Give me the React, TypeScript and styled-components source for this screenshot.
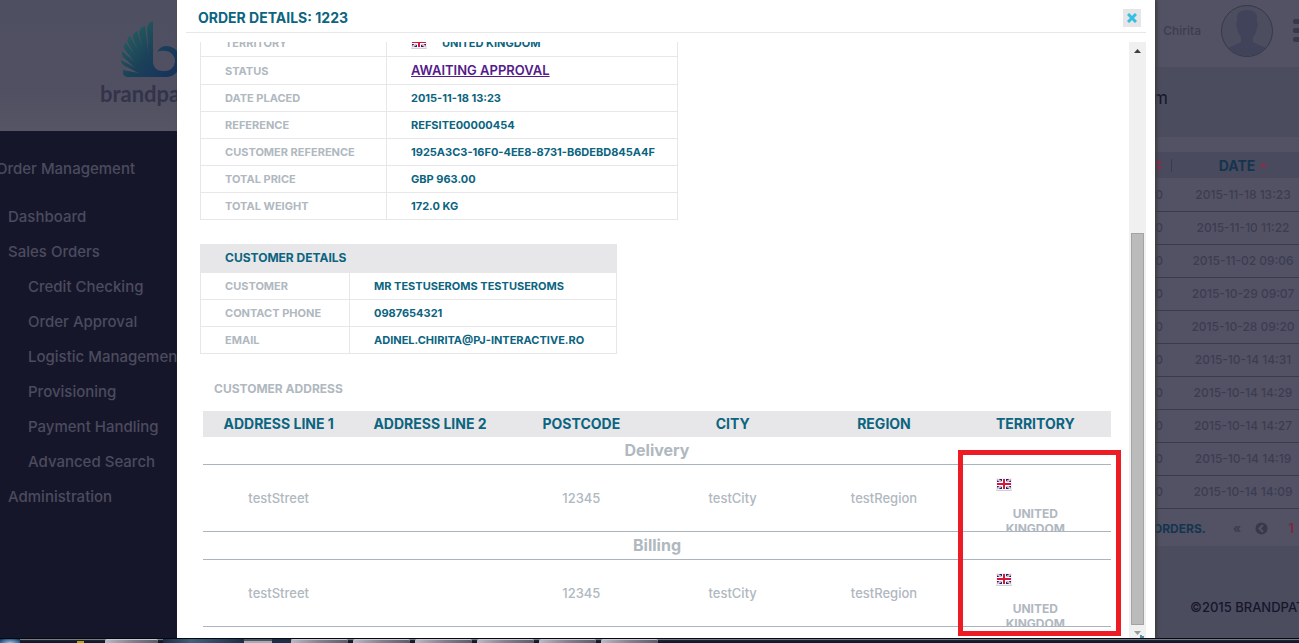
import React from "react";
import styled, { createGlobalStyle } from "styled-components";

const GlobalStyle = createGlobalStyle`
  * { box-sizing: border-box; }
  body { margin: 0; font-family: Inter, "Open Sans", sans-serif; font-size: 13px; }
  button { font: inherit; border: 0; padding: 0; background: none; cursor: pointer; }
  a { color: inherit; text-decoration: none; }
  table { border-collapse: collapse; border-spacing: 0; }
  h1, h2, p { margin: 0; }
`;

const teal = "#0b6480";
const grey = "#b0b8c0";
const line = "#e7e7e9";

const Screen = styled.div`
  position: relative;
  display: grid;
  grid-template-rows: minmax(0, 1fr) 5px;
  height: 100vh;
  overflow: hidden;
`;

const Page = styled.div`
  display: flex;
  min-height: 0;
  overflow: hidden;
  background: #4c4c5f;
`;

const Sidebar = styled.aside`
  flex: 0 0 177px;
  overflow: hidden;
  background: #16162b;
  color: #4b4b5e;
`;

const LogoPanel = styled.div`
  height: 131px;
  padding: 20px 0 0 100px;
  overflow: hidden;
  background: linear-gradient(#4f4f62, #505062 70%, #555565);
`;

const LogoMark = styled.svg`
  display: block;
  width: 80px;
  height: 60px;
`;

const LogoName = styled.div`
  font-family: Lato, sans-serif;
  font-size: 22px;
  font-weight: 700;
  line-height: 28px;
  color: #33334a;
`;

const Nav = styled.nav`
  display: flex;
  flex-direction: column;
  padding-top: 20px;
`;

const NavHeading = styled.a`
  margin-bottom: 13px;
  line-height: 35px;
  font-size: 15px;
  font-weight: 500;
  text-indent: -4px;
  white-space: nowrap;
`;

const NavLink = styled.a<{ $nested?: boolean }>`
  padding-left: ${(p) => (p.$nested ? 28 : 8)}px;
  line-height: 35px;
  font-size: 15px;
  font-weight: 500;
  white-space: nowrap;
`;

const Main = styled.main`
  flex: 1;
  min-width: 0;
  display: flex;
  flex-direction: column;
  overflow: hidden;
  color: #3c3c51;
`;

const TopBar = styled.header`
  display: flex;
  align-items: center;
  justify-content: flex-end;
  flex: 0 0 67px;
  padding-bottom: 6px;
  background: #525264;
  font-size: 12px;
  font-weight: 500;
`;

const Avatar = styled.svg`
  width: 54px;
  height: 54px;
  margin: 0 19px;
`;

const MenuButton = styled.button`
  display: flex;
  flex-direction: column;
  gap: 4px;
  width: 6px;
`;

const MenuBar = styled.span`
  height: 5px;
  border-radius: 2px 0 0 2px;
  background: #38384d;
`;

const TitleBand = styled.div`
  flex: 0 0 70px;
  padding: 0 131px 8px 0;
  line-height: 62px;
  font-size: 17px;
  text-align: right;
  color: #16162b;
`;

const OrdersPanel = styled.section`
  padding-top: 15px;
  background: #525264;
`;

const OrdersTable = styled.table`
  width: calc(100% + 15px);
  font-size: 12px;
  font-weight: 500;
  th { height: 26px; padding: 0; background: #4a4a5e; color: #15354f; font-size: 14px; font-weight: 700; }
  td { height: 33px; padding: 0; border-bottom: 1px solid #3b3b50; text-align: center; }
  th:last-child { width: 142px; }
  th:first-child, td:first-child { padding-right: 9px; text-align: right; }
`;

const SortCell = styled.div`
  display: flex;
  align-items: center;
  justify-content: center;
  gap: 5px;
`;

const ColumnRule = styled.div`
  display: flex;
  align-items: center;
  justify-content: flex-end;
  height: 13px;
  border-right: 1px solid #3b3b50;
  margin-right: -9px;
  padding-right: 9px;
`;

const Pager = styled.div`
  display: flex;
  align-items: center;
  justify-content: flex-end;
  height: 37px;
  padding: 2px 5px 0 0;
  font-size: 12px;
  font-weight: 700;
  color: #15354f;
`;

const PagerButton = styled.button<{ $active?: boolean }>`
  display: flex;
  margin-left: ${(p) => (p.$active ? 20 : 14)}px;
  font-size: 13px;
  color: ${(p) => (p.$active ? "#7b2a42" : "#3c3c51")};
`;

const PagerGap = styled.span`
  width: 13px;
`;

const Footer = styled.footer`
  padding-top: 51px;
  line-height: 20px;
  display: flex;
  justify-content: flex-end;
  font-size: 13px;
  font-weight: 500;
  white-space: nowrap;
  color: #16162b;
`;

const FooterText = styled.span`
  width: 109px;
`;

const Overlay = styled.div`
  position: absolute;
  inset: 0 0 5px;
  display: flex;
  padding: 0 144px 0 177px;
  overflow: hidden;
`;

const Dialog = styled.div`
  position: relative;
  flex: 1;
  min-width: 0;
  display: flex;
  flex-direction: column;
  padding: 0 9px;
  background: #fff;
  box-shadow: 2px 0 3px #3c3c3c;
`;

const DialogHeader = styled.header`
  display: flex;
  align-items: center;
  justify-content: space-between;
  flex: 0 0 33px;
  margin-bottom: 9px;
  padding: 4px 5px 0 12px;
  border-bottom: 1px solid ${line};
`;

const DialogTitle = styled.h1`
  font-size: 14px;
  line-height: 20px;
  font-weight: 700;
  color: ${teal};
`;

const CloseButton = styled.button`
  display: flex;
  align-items: center;
  justify-content: center;
  width: 18px;
  height: 18px;
  background: #e6e6e8;
`;

const DialogBody = styled.div`
  flex: 1;
  min-height: 0;
  display: flex;
`;

const Content = styled.div`
  flex: 1;
  min-width: 0;
  display: flex;
  flex-direction: column;
  justify-content: flex-end;
  align-items: flex-start;
  padding: 0 18px 11px 14px;
  overflow: hidden;
`;

const DetailTable = styled.table<{ $label: number; $value: number }>`
  flex: none;
  margin-bottom: 24px;
  border-collapse: separate;
  border: solid ${line};
  border-width: 0 1px 0 1px;
  table-layout: fixed;
  width: ${(p) => p.$label + p.$value + 1}px;
  font-size: 11px;
  line-height: 16px;
  col:first-child { width: ${(p) => p.$label}px; }
  th, td { height: 27px; padding: 0 0 0 24px; border-bottom: 1px solid ${line}; text-align: left; font-weight: 700; white-space: nowrap; }
  th { border-right: 1px solid ${line}; color: ${grey}; }
  td { color: ${teal}; }
  thead th { height: 29px; border-right: 0; background: #e7e7e9; color: ${teal}; font-size: 12px; }
`;

const TallRow = styled.tr`
  th, td { height: 28px; }
`;

const StatusLink = styled.a`
  font-size: 13px;
  font-weight: 600;
  color: #551a8b;
  text-decoration: underline;
`;

const FlagText = styled.div`
  display: flex;
  align-items: center;
  gap: 15px;
`;

const SectionTitle = styled.h2`
  flex: none;
  padding: 0 0 11px 14px;
  line-height: 22px;
  font-size: 12px;
  font-weight: 700;
  color: ${grey};
`;

const AddressWrap = styled.div`
  flex: none;
  align-self: stretch;
  padding-left: 3px;
`;

const AddressTable = styled.table`
  width: 100%;
  table-layout: fixed;
  border-collapse: separate;
  color: ${grey};
  th, td { padding: 0; text-align: center; }
  thead th { height: 26px; background: #e7e7e9; color: ${teal}; font-size: 14px; line-height: 18px; font-weight: 700; }
  tbody th { height: 28px; padding-bottom: 1px; border-bottom: 1px solid #a9b4be; font-size: 16px; line-height: 20px; font-weight: 700; }
  td { height: 67px; border-bottom: 1px solid #a9b4be; font-weight: 500; }
`;

const Territory = styled.div`
  height: 66px;
  padding: 13px 32px 0;
  overflow: hidden;
  font-size: 12px;
  line-height: 15px;
  font-weight: 700;
`;

const TerritoryFlag = styled.div`
  display: flex;
  height: 28px;
  padding-left: 4px;
`;

const Track = styled.div`
  flex: 0 0 17px;
  display: flex;
  flex-direction: column;
  align-items: center;
  background: #f0f0f0;
`;

const TrackArrow = styled.svg`
  display: block;
  flex: none;
  width: 17px;
  height: 13px;
`;

const UpArea = styled.div`
  flex: 191;
  padding-top: 2px;
`;

const Thumb = styled.div`
  flex: 394;
  width: 13px;
  border: 1px solid #a3a3a3;
  background: #bbb;
`;

const Highlight = styled.div`
  position: absolute;
  right: 34px;
  bottom: 2px;
  width: 163px;
  height: 186px;
  border: 5px solid #ed1c24;
`;

const Taskbar = styled.div`
  display: flex;
  border-top: 1px solid #070710;
  background: linear-gradient(#777b88 1px, #1b2639 1px, #0d1420);
`;

const TaskSlot = styled.div<{ $width: number; $tone?: string }>`
  flex: 0 0 ${(p) => p.$width}px;
  background: ${(p) => p.$tone || "transparent"};
`;

const TaskButton = styled.div<{ $width: number }>`
  flex: 0 0 ${(p) => p.$width}px;
  margin-right: 5px;
  border-radius: 2px 2px 0 0;
  border-top: 1px solid #c9c9d2;
  background: linear-gradient(100deg, #bdb9c6, #84828f 50%, #5c5c6b);
`;

function Flag() {
  return (
    <svg width="16" height="13" viewBox="0 0 16 13" role="img" aria-label="UK flag">
      <rect x="0" y="1" width="16" height="12" rx="1" fill="#cfd0d4" />
      <rect x="0" y="0" width="16" height="12" rx="1" fill="#f4f2f6" />
      <rect x="1" y="1" width="14" height="10" fill="#1c2270" />
      <path d="M1 1 15 11M15 1 1 11" stroke="#f4f2f6" strokeWidth="2" />
      <path d="M1 1 15 11M15 1 1 11" stroke="#d4183b" strokeWidth="1" strokeOpacity="0.400" />
      <path d="M8 1V11M1 6H15" stroke="#fff" strokeWidth="4" />
      <path d="M8 1V11M1 6H15" stroke="#d4183b" strokeWidth="2" />
    </svg>
  );
}

function Logo() {
  return (
    <LogoMark viewBox="100 20 80 60" aria-hidden="true">
      <defs>
        <linearGradient id="wing" gradientUnits="userSpaceOnUse" x1="122" y1="30" x2="170" y2="74">
          <stop offset="0" stopColor="#24625f" />
          <stop offset="0.550" stopColor="#1b4159" />
          <stop offset="1" stopColor="#17345a" />
        </linearGradient>
      </defs>
      <g fill="url(#wing)">
        <path d="M153 21Q147 23 147 29L149 66H153Z" />
        <path d="M145 26Q139 28 139 33L147 68 150 66Z" />
        <path d="M137 31Q132 33 133 38L145 70 149 67Z" />
        <path d="M130 36Q126 39 128 43L144 72 148 68Z" />
        <path d="M126 43Q122 46 125 50L143 73 146 70Z" />
        <path d="M122 51Q121 55 124 58L143 75 145 71Z" />
        <path d="M121 60Q121 64 125 66L144 76 145 73Z" />
        <path d="M123 70Q122 76 127 77H163L150 73 144 74Z" />
        <path d="M144 66 153 58Q152 71 163 71V77H140Z" />
        <path d="M157 52Q160 46 166 46A15 15.500 0 0 1 166 77H160V71H164A10 10 0 0 0 166 51Q160 50 157 52Z" />
      </g>
    </LogoMark>
  );
}

const navItems: [string, boolean][] = [
  ["Dashboard", false],
  ["Sales Orders", false],
  ["Credit Checking", true],
  ["Order Approval", true],
  ["Logistic Management", true],
  ["Provisioning", true],
  ["Payment Handling", true],
  ["Advanced Search", true],
  ["Administration", false],
];

const orderDates = [
  "2015-11-18 13:23",
  "2015-11-10 11:22",
  "2015-11-02 09:06",
  "2015-10-29 09:07",
  "2015-10-28 09:20",
  "2015-10-14 14:31",
  "2015-10-14 14:29",
  "2015-10-14 14:27",
  "2015-10-14 14:19",
  "2015-10-14 14:09",
];

const orderFields = [
  ["DATE PLACED", "2015-11-18 13:23"],
  ["REFERENCE", "REFSITE00000454"],
  ["CUSTOMER REFERENCE", "1925A3C3-16F0-4EE8-8731-B6DEBD845A4F"],
  ["TOTAL PRICE", "GBP 963.00"],
  ["TOTAL WEIGHT", "172.0 KG"],
];

const customerFields = [
  ["CUSTOMER", "MR TESTUSEROMS TESTUSEROMS"],
  ["CONTACT PHONE", "0987654321"],
  ["EMAIL", "ADINEL.CHIRITA@PJ-INTERACTIVE.RO"],
];

const addressColumns = ["ADDRESS LINE 1", "ADDRESS LINE 2", "POSTCODE", "CITY", "REGION", "TERRITORY"];

function FieldRows({ rows }: { rows: string[][] }) {
  return (
    <>
      {rows.map(([label, value]) => (
        <tr key={label}>
          <th scope="row">{label}</th>
          <td>{value}</td>
        </tr>
      ))}
    </>
  );
}

function AddressRows({ title }: { title: string }) {
  return (
    <tbody>
      <tr>
        <th colSpan={6} scope="rowgroup">{title}</th>
      </tr>
      <tr>
        <td>testStreet</td>
        <td />
        <td>12345</td>
        <td>testCity</td>
        <td>testRegion</td>
        <td>
          <Territory>
            <TerritoryFlag><Flag /></TerritoryFlag>
            UNITED KINGDOM
          </Territory>
        </td>
      </tr>
    </tbody>
  );
}

export default function App() {
  return (
    <Screen>
      <GlobalStyle />
      <Page>
        <Sidebar>
          <LogoPanel>
            <Logo />
            <LogoName>brandpath</LogoName>
          </LogoPanel>
          <Nav>
            <NavHeading href="#orders">Order Management</NavHeading>
            {navItems.map(([label, nested]) => (
              <NavLink key={label} href="#nav" $nested={nested}>{label}</NavLink>
            ))}
          </Nav>
        </Sidebar>
        <Main>
          <TopBar>
            Chirita
            <Avatar viewBox="0 0 54 54" aria-hidden="true">
              <defs>
                <clipPath id="face"><circle cx="27" cy="27" r="25" /></clipPath>
              </defs>
              <circle cx="27" cy="27" r="25.500" fill="#4d4d60" stroke="#38384b" />
              <path
                clipPath="url(#face)"
                d="M17 14Q17 6 27 6T37 14V18Q39 20 37 24 36 30 33 33V38Q36 40 44 43 50 46 52 54H2Q4 46 10 43 18 40 21 38V33Q18 30 17 24 15 20 17 18Z"
                fill="#404359"
              />
            </Avatar>
            <MenuButton aria-label="Menu"><MenuBar /><MenuBar /><MenuBar /></MenuButton>
          </TopBar>
          <TitleBand>m</TitleBand>
          <OrdersPanel>
            <OrdersTable>
              <thead>
                <tr>
                  <th scope="col">
                    <ColumnRule>
                      <svg width="7" height="10" viewBox="0 0 7 10" aria-label="Sort">
                        <path d="M0 4 3 0H4L7 4ZM0 6 3 10H4L7 6Z" fill="#86304a" />
                      </svg>
                    </ColumnRule>
                  </th>
                  <th scope="col">
                    <SortCell>
                      DATE
                      <svg width="7" height="4" viewBox="0 0 7 4" aria-hidden="true">
                        <path d="M0 4 3 0H4L7 4Z" fill="#86304a" />
                      </svg>
                    </SortCell>
                  </th>
                </tr>
              </thead>
              <tbody>
                {orderDates.map((date) => (
                  <tr key={date}>
                    <td>0</td>
                    <td>{date}</td>
                  </tr>
                ))}
              </tbody>
            </OrdersTable>
            <Pager>
              ORDERS.
              <PagerGap />
              <PagerButton aria-label="First page">«</PagerButton>
              <PagerButton aria-label="Previous page">
                <svg width="13" height="13" viewBox="0 0 13 13" aria-hidden="true">
                  <circle cx="6.500" cy="6.500" r="6" fill="#38384d" />
                  <path d="M8 3 4.500 6.500 8 10" fill="none" stroke="#525264" strokeWidth="2" />
                </svg>
              </PagerButton>
              <PagerButton $active>1</PagerButton>
            </Pager>
          </OrdersPanel>
          <Footer>
            <FooterText>©2015 BRANDPATH</FooterText>
          </Footer>
        </Main>
      </Page>

      <Overlay>
        <Dialog role="dialog" aria-labelledby="dialog-title">
          <DialogHeader>
            <DialogTitle id="dialog-title">ORDER DETAILS: 1223</DialogTitle>
            <CloseButton aria-label="Close">
              <svg width="10" height="10" viewBox="0 0 10 10" aria-hidden="true">
                <path d="M1 1 9 9M9 1 1 9" stroke="#35bfe2" strokeWidth="3" />
              </svg>
            </CloseButton>
          </DialogHeader>
          <DialogBody>
            <Content>
              <DetailTable $label={186} $value={291}>
                <colgroup><col /><col /></colgroup>
                <tbody>
                  <TallRow>
                    <th scope="row">TERRITORY</th>
                    <td><FlagText><Flag />UNITED KINGDOM</FlagText></td>
                  </TallRow>
                  <TallRow>
                    <th scope="row">STATUS</th>
                    <td><StatusLink href="#status">AWAITING APPROVAL</StatusLink></td>
                  </TallRow>
                  <FieldRows rows={orderFields} />
                </tbody>
              </DetailTable>
              <DetailTable $label={149} $value={267}>
                <colgroup><col /><col /></colgroup>
                <thead>
                  <tr><th colSpan={2}>CUSTOMER DETAILS</th></tr>
                </thead>
                <tbody>
                  <FieldRows rows={customerFields} />
                </tbody>
              </DetailTable>
              <SectionTitle>CUSTOMER ADDRESS</SectionTitle>
              <AddressWrap>
                <AddressTable>
                  <thead>
                    <tr>{addressColumns.map((c) => <th key={c} scope="col">{c}</th>)}</tr>
                  </thead>
                  <AddressRows title="Delivery" />
                  <AddressRows title="Billing" />
                </AddressTable>
              </AddressWrap>
            </Content>
            <Track>
              <UpArea>
                <TrackArrow viewBox="0 0 17 13" aria-hidden="true">
                  <path d="M5 9 8.500 5 12 9Z" fill="#404040" />
                </TrackArrow>
              </UpArea>
              <Thumb />
              <TrackArrow viewBox="0 0 17 13" aria-hidden="true">
                <path d="M5 6 12 6 8.500 10Z" fill="#999" />
                <path d="M11 10V13H15V11H13V10Z" fill="#4a94a4" />
              </TrackArrow>
            </Track>
          </DialogBody>
          <Highlight />
        </Dialog>
      </Overlay>

      <Taskbar aria-hidden="true">
        <TaskSlot $width={20} $tone="radial-gradient(ellipse at 50% 100%, #9fc4de, #2b5d8a 70%, #142033)" />
        <TaskSlot $width={57} />
        <TaskSlot $width={7} $tone="linear-gradient(transparent 2px, #b5a512 2px)" />
        <TaskSlot $width={21} />
        <TaskButton $width={53} />
        <TaskSlot $width={81} $tone="linear-gradient(90deg, #1b2c45, #41617d 35%, #1c2e48)" />
        <TaskSlot $width={28} $tone="linear-gradient(#4c596d 2px, #aaa9ad 2px)" />
        <TaskSlot $width={19} $tone="#1c2e48" />
        <TaskButton $width={57} />
        <TaskButton $width={57} />
        <TaskButton $width={57} />
        <TaskButton $width={57} />
        <TaskButton $width={57} />
        <TaskButton $width={57} />
      </Taskbar>
    </Screen>
  );
}
